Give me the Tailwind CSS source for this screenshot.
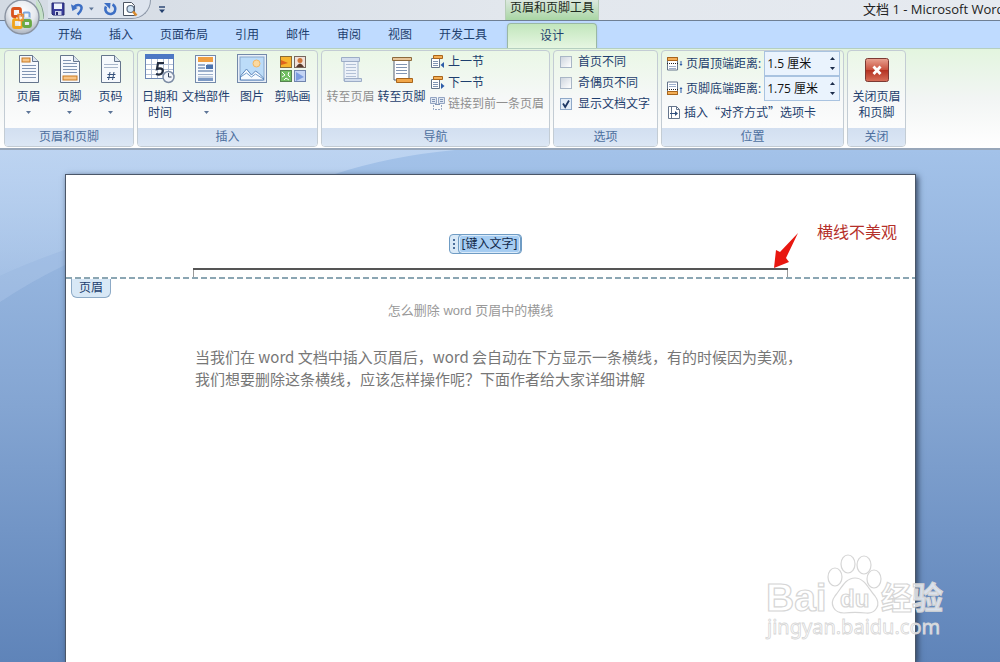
<!DOCTYPE html>
<html lang="zh-CN">
<head>
  <meta charset="UTF-8">
  <meta name="viewport" content="width=device-width, initial-scale=1">
  <title>文档 1 - Microsoft Word</title>
  <script src="https://cdn.jsdelivr.net/npm/@tailwindcss/browser@4"></script>
</head>
<body class="h-screen flex flex-col overflow-hidden text-xs text-[#1e3f6e] font-['Open_Sans','Noto_Sans_CJK_SC',sans-serif]">

  <!-- Title bar -->
  <header class="relative flex h-5 shrink-0 items-start bg-linear-to-r from-[#d3dae3] via-[#e2e7ed] to-[#e6eaf0] pl-12 leading-[18px]">
    <div class="flex h-[19px] w-[457px] shrink-0 items-center">
      <div class="flex h-[19px] items-center gap-1 rounded-br-full border-r border-b border-[#8d98a8] bg-[#dde4ee] pr-3">
        <button type="button" aria-label="保存" class="w-4 ml-[2px]">
          <svg class="block size-4" viewBox="0 0 16 16"><path d="M2 2h12v12H3l-1-1z" fill="#3b3f9c" stroke="#272b70"/><rect x="4" y="2.500" width="8" height="5.500" fill="#eef3fb"/><rect x="5" y="10" width="6.500" height="4" fill="#cdd3ea"/><rect x="6" y="11" width="2" height="3" fill="#272b70"/></svg>
        </button>
        <button type="button" aria-label="撤消" class="flex w-6 items-center gap-1">
          <svg class="block size-4" viewBox="0 0 16 16"><path d="M4 6c4-4 9-2 8 2-.4 2-2 4-4 6" fill="none" stroke="#3d6fc4" stroke-width="2.600"/><path d="M1 3l1.500 7L8 7z" fill="#3d6fc4"/></svg>
          <svg class="block h-1 w-[5px]" viewBox="0 0 5 4"><path d="M0 .5h5L2.500 3.500z" fill="#5d7597"/></svg>
        </button>
        <button type="button" aria-label="恢复" class="w-4 ml-1">
          <svg class="block size-4" viewBox="0 0 16 16"><path d="M10.500 3.500A5 5 0 1 1 4 5.500" fill="none" stroke="#3d6fc4" stroke-width="2.600"/><path d="M2 2h6.500L8 8z" fill="#3d6fc4"/></svg>
        </button>
        <button type="button" aria-label="打印预览" class="w-4">
          <svg class="block size-4" viewBox="0 0 16 16"><path d="M1.500 1.500h8l3 3v10h-11z" fill="#fff" stroke="#4c5563"/><circle cx="8.500" cy="8" r="3.500" fill="#cfe3f5" stroke="#5c6c80" stroke-width="1.200"/><path d="M11 10.500l3.500 4" stroke="#d98b2f" stroke-width="2.500"/></svg>
        </button>
      </div>
      <button type="button" aria-label="自定义快速访问工具栏" class="ml-2">
        <svg class="block h-2 w-[6px]" viewBox="0 0 6 8"><path d="M0 1h6" stroke="#24406e" stroke-width="1.400"/><path d="M0 3.500h6L3 7z" fill="#24406e"/></svg>
      </button>
    </div>
    <div class="h-5 w-[94px] shrink-0 border-x border-[#b7cdb7] bg-linear-to-b from-[#dce8df] to-[#a9d6a4] pt-px text-center leading-[14px] text-[#1d2a20]">页眉和页脚工具</div>
    <div class="ml-auto w-[137px] overflow-hidden whitespace-nowrap text-[13px] text-[#222]">文档 1 - Microsoft Word</div>

    <!-- Office button -->
    <button type="button" aria-label="Office 按钮" class="absolute top-0 left-0 z-10">
      <svg class="block h-9 w-11" viewBox="0 0 44 36">
        <defs><radialGradient id="orb" cx=".5" cy=".35" r=".65"><stop offset="0" stop-color="#fff"/><stop offset=".6" stop-color="#e6e9ee"/><stop offset="1" stop-color="#a9b1bd"/></radialGradient></defs>
        <path d="M36 0q7 7 7 20h-7z" fill="#c5e2c6"/><path d="M38 0q5 6 6 19" fill="none" stroke="#7fa287"/>
        <circle cx="22" cy="17" r="17" fill="url(#orb)" stroke="#8a93a1" stroke-width="1.400"/>
        <g fill="none" stroke-width="2.800">
          <rect x="12.500" y="8.500" width="8" height="8" rx="1.500" stroke="#d9531e"/>
          <rect x="13.500" y="19.500" width="8" height="8" rx="1.500" stroke="#f0a31c"/>
          <rect x="23.500" y="12.500" width="6" height="6" rx="1" stroke="#7da7dd" stroke-width="2"/>
          <rect x="23.500" y="20.500" width="7" height="6" rx="1" stroke="#69a944"/>
          <path d="M20 13v13M16 18h14" stroke="#fff" stroke-width="1.200"/>
          <path d="M18 14.500h5v6h-4z" stroke="#e98a2b" stroke-width="1.500"/>
        </g>
      </svg>
    </button>
  </header>

  <!-- Tabs -->
  <nav class="flex h-7 shrink-0 items-end gap-px border-t border-[#6f7f94] bg-[#bfdbff] pl-[45px] leading-[26px]">
    <a href="#" class="px-[13px]">开始</a>
    <a href="#" class="px-[13px]">插入</a>
    <a href="#" class="px-[13px]">页面布局</a>
    <a href="#" class="px-[13px]">引用</a>
    <a href="#" class="px-[13px]">邮件</a>
    <a href="#" class="px-[13px]">审阅</a>
    <a href="#" class="px-[13px]">视图</a>
    <a href="#" class="px-[13px]">开发工具</a>
    <a href="#" class="ml-[6px] w-[90px] rounded-t border border-b-0 border-[#9ab8a4] bg-linear-to-b from-[#c2e6bc] to-[#e6f6e2] text-center leading-6 shadow-sm">设计</a>
  </nav>

  <!-- Ribbon -->
  <section class="flex h-[102px] shrink-0 gap-[3px] border-t border-b-2 border-t-[#b5cfc0] border-b-[#98a7ba] bg-linear-to-b from-[#e3f5df] via-[#f2f5f4] to-white px-1 pt-px pb-px leading-4">

    <div class="flex w-[130px] flex-col overflow-hidden rounded border border-[#c3ccd4] bg-linear-to-b from-[#eaf7e6] via-[#f6f8f8] to-white">
      <div class="flex flex-1 pt-[3px] pl-[3px]">
        <button type="button" class="flex w-[41px] flex-col items-center">
          <svg class="mb-[5px] block h-[30px] w-6" viewBox="0 0 24 30"><path d="M2.500 1.500h13l6 6v21h-19z" fill="#f6f9fd" stroke="#65758c"/><path d="M15.500 1.500v6h6" fill="#dbe4ef" stroke="#65758c"/><rect x="5" y="4" width="8" height="4" fill="#f7c486" stroke="#c77a22"/><path d="M5 11.500h14M5 14.500h14M5 17.500h14M5 20.500h14M5 23.500h14" stroke="#8195b3"/></svg>
          <span>页眉</span>
          <svg class="mt-[6px] block h-[3px] w-[5px]" viewBox="0 0 5 3"><path d="M0 0h5L2.500 3z" fill="#5d7597"/></svg>
        </button>
        <button type="button" class="flex w-[41px] flex-col items-center">
          <svg class="mb-[5px] block h-[30px] w-6" viewBox="0 0 24 30"><path d="M2.500 1.500h13l6 6v21h-19z" fill="#f6f9fd" stroke="#65758c"/><path d="M15.500 1.500v6h6" fill="#dbe4ef" stroke="#65758c"/><path d="M5 6.500h8M5 9.500h14M5 12.500h14M5 15.500h14M5 18.500h14" stroke="#8195b3"/><rect x="5" y="22" width="14" height="4" fill="#f7c486" stroke="#c77a22"/></svg>
          <span>页脚</span>
          <svg class="mt-[6px] block h-[3px] w-[5px]" viewBox="0 0 5 3"><path d="M0 0h5L2.500 3z" fill="#5d7597"/></svg>
        </button>
        <button type="button" class="flex w-[41px] flex-col items-center">
          <svg class="mb-[5px] block h-[30px] w-6" viewBox="0 0 24 30"><path d="M2.500 1.500h13l6 6v21h-19z" fill="#f6f9fd" stroke="#65758c"/><path d="M15.500 1.500v6h6" fill="#dbe4ef" stroke="#65758c"/><path d="M5 10.500h14M5 13.500h14" stroke="#a9b7cb"/><path d="M11 18l-1.500 8M15 18l-1.500 8M8.500 20.500h8M8 23.500h8" stroke="#34507c"/></svg>
          <span>页码</span>
          <svg class="mt-[6px] block h-[3px] w-[5px]" viewBox="0 0 5 3"><path d="M0 0h5L2.500 3z" fill="#5d7597"/></svg>
        </button>
      </div>
      <h2 class="h-[18px] bg-linear-to-b from-[#d2dff0] to-[#dce7f5] text-center text-[#4d6f9e] leading-[18px]">页眉和页脚</h2>
    </div>

    <div class="flex w-[181px] flex-col overflow-hidden rounded border border-[#c3ccd4] bg-linear-to-b from-[#eaf7e6] via-[#f6f8f8] to-white">
      <div class="flex flex-1 pt-[3px] pl-[3px]">
        <button type="button" class="flex w-[38px] flex-col items-center">
          <svg class="mb-[5px] block h-[30px] w-[30px]" viewBox="0 0 30 30"><rect x=".5" y=".5" width="28" height="24" fill="#fff" stroke="#6d86b3"/><rect width="29" height="5" fill="#4d78c4"/><path d="M1 10.500h27M1 15.500h27M1 20.500h27M6.500 5v19M12.500 5v19M18.500 5v19M23.500 5v19" stroke="#b3c0d6"/><path d="M19 9h-6l-1 6c5-2 7 1 5 4-1 1.500-3 2-6 1" fill="none" stroke="#222c3e" stroke-width="2.200"/><circle cx="23.500" cy="23" r="5.500" fill="#f2f5fa" stroke="#7c8ca4" stroke-width="1.500"/><path d="M23.500 19v4h3" fill="none" stroke="#33415a"/></svg>
          <span>日期和<br>时间</span>
        </button>
        <button type="button" class="flex w-[54px] flex-col items-center">
          <svg class="mb-[5px] block h-[30px] w-6" viewBox="0 0 24 30"><rect x="1.500" y="1.500" width="20" height="27" fill="#f7fafd" stroke="#7389aa"/><rect x="4" y="3" width="15" height="5" fill="#ef9f42"/><path d="M4 11h7M4 14h7M4 17h15M13 11h6" stroke="#7e97bb" stroke-width="1.500"/><rect x="12" y="11" width="7" height="4" fill="#4a73ae"/><path d="M4 20.500h15M4 23h15" stroke="#9db0cb"/><rect x="4" y="24" width="15" height="3" fill="#7d9ac5"/></svg>
          <span class="whitespace-nowrap">文档部件</span>
          <svg class="mt-[6px] block h-[3px] w-[5px]" viewBox="0 0 5 3"><path d="M0 0h5L2.500 3z" fill="#5d7597"/></svg>
        </button>
        <button type="button" class="flex w-[38px] flex-col items-center">
          <svg class="mb-[5px] block h-[30px] w-[30px]" viewBox="0 0 30 30"><rect x=".5" y=".5" width="29" height="28" fill="#e8eff8" stroke="#7389aa"/><rect x="3" y="3" width="24" height="23" fill="#bcdcf8" stroke="#89a8cb"/><circle cx="19.500" cy="9.500" r="3.500" fill="#fbd9a0" stroke="#f0b765"/><path d="M3.500 22l6-7 5 6 4-4 3 2 5 5v2h-23z" fill="#f7fbff" stroke="#5c85ba"/><path d="M3.500 23l6-4 5 4 4-3 8 5" fill="none" stroke="#6f9bcb"/></svg>
          <span>图片</span>
        </button>
        <button type="button" class="flex w-[43px] flex-col items-center">
          <svg class="mb-[5px] block h-[30px] w-7" viewBox="0 0 28 30"><rect x="1.500" y="2.500" width="11" height="11" fill="#f7b52f" stroke="#8c6c34"/><path d="M2 6l7 3-7 2z" fill="#de621d"/><rect x="15.500" y="2.500" width="11" height="11" fill="#f0e1d8" stroke="#77685e"/><circle cx="21" cy="6.500" r="2.500" fill="#cf7639"/><path d="M17 13q4-7 8 0z" fill="#58392b"/><rect x="1.500" y="16.500" width="11" height="11" fill="#72bf63" stroke="#568350"/><path d="M3 18l3 3-3 2M10 18l-1 3 2 2M5 26l2-2 3 2" fill="none" stroke="#fff"/><rect x="15.500" y="16.500" width="11" height="11" fill="#c4d4f4" stroke="#7084ad"/><path d="M17 18l8 5-8 4z" fill="#7c9de0"/></svg>
          <span>剪贴画</span>
        </button>
      </div>
      <h2 class="h-[18px] bg-linear-to-b from-[#d2dff0] to-[#dce7f5] text-center text-[#4d6f9e] leading-[18px]">插入</h2>
    </div>

    <div class="flex w-[229px] flex-col overflow-hidden rounded border border-[#c3ccd4] bg-linear-to-b from-[#eaf7e6] via-[#f6f8f8] to-white">
      <div class="flex flex-1 pl-[3px]">
        <button type="button" disabled class="flex w-[51px] flex-col items-center pt-[3px] text-[#8f8f8f]">
          <svg class="mb-[5px] block h-[30px] w-6" viewBox="0 0 24 30"><path d="M5 6h14v21H5z" fill="#edf2f9" stroke="#a2b2cc"/><path d="M7 10.500h10M7 13.500h10M7 16.500h10M7 19.500h10M7 22.500h10" stroke="#b3c1d6"/><path d="M2.500 3.500h18v4h-18zM5.500 24.500h17v3h-17z" fill="#d3deee" stroke="#9dadc7"/></svg>
          <span class="whitespace-nowrap">转至页眉</span>
        </button>
        <button type="button" class="flex w-[51px] flex-col items-center pt-[3px]">
          <svg class="mb-[5px] block h-[30px] w-6" viewBox="0 0 24 30"><path d="M4 6h15v20H4z" fill="#fff" stroke="#545e70"/><path d="M6 10.500h11M6 13.500h11M6 16.500h11M6 19.500h11" stroke="#8195b3"/><path d="M2.500 3.500h19v3h-19z" fill="#e7c69a" stroke="#8d6a3c"/><path d="M6.500 24.500h16v4h-16z" fill="#f1a649" stroke="#a9651a"/></svg>
          <span class="whitespace-nowrap">转至页脚</span>
        </button>
        <div class="ml-[3px] flex flex-col">
          <button type="button" class="flex h-[21px] items-center gap-[3px] whitespace-nowrap">
            <svg class="block size-[15px]" viewBox="0 0 15 15"><path d="M1.500 4.500h8v9h-8z" fill="#fff" stroke="#65758c"/><path d="M3 7.500h5M3 9.500h5M3 11.500h5" stroke="#8195b3"/><path d="M3.500 1.500h9v3h-9z" fill="#f3ae55" stroke="#a9651a"/><path d="M14 8v6l-3.500-3z" fill="#2d5da8"/></svg>
            上一节
          </button>
          <button type="button" class="flex h-[21px] items-center gap-[3px] whitespace-nowrap">
            <svg class="block size-[15px]" viewBox="0 0 15 15"><path d="M1.500 4.500h8v9h-8z" fill="#fff" stroke="#65758c"/><path d="M3 7.500h5M3 9.500h5M3 11.500h5" stroke="#8195b3"/><path d="M3.500 1.500h9v3h-9z" fill="#f3ae55" stroke="#a9651a"/><path d="M11 8v6l3.500-3z" fill="#2d5da8"/></svg>
            下一节
          </button>
          <button type="button" disabled class="flex h-[21px] items-center gap-[3px] whitespace-nowrap text-[#8f8f8f]">
            <svg class="block size-[15px]" viewBox="0 0 15 15"><path d="M.5 1.500h6v6h-6zM8.500 1.500h6v6h-6z" fill="#dfe7f2" stroke="#93a5c2"/><path d="M2 3.500h3M2 5.500h3M10 3.500h3M10 5.500h3M5 8.500h5" stroke="#8094b4"/><path d="M3.500 9v4.500h8V9" fill="none" stroke="#93a5c2" stroke-dasharray="2 1"/></svg>
            链接到前一条页眉
          </button>
        </div>
      </div>
      <h2 class="h-[18px] bg-linear-to-b from-[#d2dff0] to-[#dce7f5] text-center text-[#4d6f9e] leading-[18px]">导航</h2>
    </div>

    <div class="flex w-[105px] flex-col overflow-hidden rounded border border-[#c3ccd4] bg-linear-to-b from-[#eaf7e6] via-[#f6f8f8] to-white">
      <div class="flex-1 pl-[6px]">
        <label class="flex h-[21px] items-center gap-[6px] whitespace-nowrap">
          <input type="checkbox" class="size-3 appearance-none border border-[#a9b6c6] bg-linear-to-br from-[#cfd6df] to-white">
          首页不同
        </label>
        <label class="flex h-[21px] items-center gap-[6px] whitespace-nowrap">
          <input type="checkbox" class="size-3 appearance-none border border-[#a9b6c6] bg-linear-to-br from-[#cfd6df] to-white">
          奇偶页不同
        </label>
        <label class="flex h-[21px] items-center gap-[6px] whitespace-nowrap">
          <span class="grid size-3">
            <input type="checkbox" checked class="peer col-start-1 row-start-1 size-3 appearance-none border border-[#8fa9c8] bg-[#e3edf8]">
            <svg class="pointer-events-none invisible col-start-1 row-start-1 block size-3 peer-checked:visible" viewBox="0 0 12 12"><path d="M3 5.500l2.200 3.500L9 2.500" fill="none" stroke="#1f3864" stroke-width="1.800"/></svg>
          </span>
          显示文档文字
        </label>
      </div>
      <h2 class="h-[18px] bg-linear-to-b from-[#d2dff0] to-[#dce7f5] text-center text-[#4d6f9e] leading-[18px]">选项</h2>
    </div>

    <div class="flex w-[183px] flex-col overflow-hidden rounded border border-[#c3ccd4] bg-linear-to-b from-[#eaf7e6] via-[#f6f8f8] to-white">
      <div class="flex-1 pl-[5px] pr-[3px]">
        <div class="flex h-[25px] items-center gap-[3px]">
          <svg class="block h-[15px] w-4 shrink-0" viewBox="0 0 16 15"><path d="M.5 1v13h10V1" fill="#fff" stroke="#65758c"/><path d="M.5 1.500h10v3H.5z" fill="#f3ae55" stroke="#a9651a"/><path d="M0 7.500h12" stroke="#222" stroke-dasharray="1 1"/><path d="M2 10.500h7M2 12.500h7" stroke="#9db0cb"/><path d="M14 5v4" stroke="#2d5da8"/><path d="M12.500 8h3L14 10z" fill="#2d5da8"/></svg>
          <label for="topDist" class="flex-1 whitespace-nowrap">页眉顶端距离:</label>
          <div class="flex h-[25px] w-[76px] shrink-0 border border-[#a9c3e0] bg-[#eaf3fd]">
            <input id="topDist" type="text" value="1.5 厘米" class="w-[60px] bg-transparent pl-[2px] text-[#111] outline-none">
            <div class="flex flex-1 flex-col items-center justify-around py-[2px]">
              <button type="button" aria-label="增大页眉顶端距离"><svg class="block h-[3px] w-[5px]" viewBox="0 0 5 3"><path d="M0 3h5L2.500 0z" fill="#1c2c4a"/></svg></button>
              <button type="button" aria-label="减小页眉顶端距离"><svg class="block h-[3px] w-[5px]" viewBox="0 0 5 3"><path d="M0 0h5L2.500 3z" fill="#1c2c4a"/></svg></button>
            </div>
          </div>
        </div>
        <div class="flex h-[25px] items-center gap-[3px]">
          <svg class="block h-[15px] w-4 shrink-0" viewBox="0 0 16 15"><path d="M.5 14V1h10v13" fill="#fff" stroke="#65758c"/><path d="M2 3.500h7M2 5.500h7" stroke="#9db0cb"/><path d="M0 8.500h12" stroke="#222" stroke-dasharray="1 1"/><path d="M.5 10.500h10v3H.5z" fill="#f3ae55" stroke="#a9651a"/><path d="M14 7v5" stroke="#2d5da8"/><path d="M12.500 8h3L14 6z" fill="#2d5da8"/></svg>
          <label for="bottomDist" class="flex-1 whitespace-nowrap">页脚底端距离:</label>
          <div class="flex h-[25px] w-[76px] shrink-0 border border-[#a9c3e0] bg-[#eaf3fd]">
            <input id="bottomDist" type="text" value="1.75 厘米" class="w-[60px] bg-transparent pl-[2px] text-[#111] outline-none">
            <div class="flex flex-1 flex-col items-center justify-around py-[2px]">
              <button type="button" aria-label="增大页脚底端距离"><svg class="block h-[3px] w-[5px]" viewBox="0 0 5 3"><path d="M0 3h5L2.500 0z" fill="#1c2c4a"/></svg></button>
              <button type="button" aria-label="减小页脚底端距离"><svg class="block h-[3px] w-[5px]" viewBox="0 0 5 3"><path d="M0 0h5L2.500 3z" fill="#1c2c4a"/></svg></button>
            </div>
          </div>
        </div>
        <button type="button" class="flex h-[22px] items-center gap-[3px] whitespace-nowrap">
          <svg class="block h-[15px] w-[14px]" viewBox="0 0 14 15"><path d="M1.500 1.500h8l3 3v9h-11z" fill="#fff" stroke="#65758c"/><path d="M4.500 1.500v12M9.500 1.500v3h3" fill="none" stroke="#65758c"/><path d="M3 8.500h6" stroke="#2f4f7d"/><path d="M8 6l3 2.500L8 11z" fill="#2f4f7d"/></svg>
          <span class="font-['Noto_Sans_CJK_SC',sans-serif]">插入“对齐方式”选项卡</span>
        </button>
      </div>
      <h2 class="h-[18px] bg-linear-to-b from-[#d2dff0] to-[#dce7f5] text-center text-[#4d6f9e] leading-[18px]">位置</h2>
    </div>

    <div class="flex w-[59px] flex-col overflow-hidden rounded border border-[#c3ccd4] bg-linear-to-b from-[#eaf7e6] via-[#f6f8f8] to-white">
      <button type="button" class="flex flex-1 flex-col items-center pt-[3px]">
        <svg class="mb-[5px] block h-[30px] w-6" viewBox="0 0 24 30"><defs><linearGradient id="red" x2="0" y2="1"><stop offset="0" stop-color="#e9a392"/><stop offset=".5" stop-color="#c9503c"/><stop offset=".5" stop-color="#b3301f"/><stop offset="1" stop-color="#d8705a"/></linearGradient></defs><rect x=".5" y="4.500" width="23" height="23" rx="2" fill="url(#red)" stroke="#7c3a33"/><path d="M8.500 12.500l7 7.500M15.500 12.500l-7 7.500" stroke="#fff" stroke-width="2.800"/></svg>
        <span class="whitespace-nowrap">关闭页眉<br>和页脚</span>
      </button>
      <h2 class="h-[18px] bg-linear-to-b from-[#d2dff0] to-[#dce7f5] text-center text-[#4d6f9e] leading-[18px]">关闭</h2>
    </div>
  </section>

  <!-- Document area -->
  <main class="relative flex flex-1 overflow-hidden bg-linear-to-b from-[#a3c2e9] via-[#84a5d2] to-[#5f84b9] pt-6 pr-[84px] pl-[65px]">
    <svg class="absolute top-0 left-0 h-[170px] w-[460px]" viewBox="0 0 460 170">
      <defs><linearGradient id="glow" x2="0" y2="1"><stop offset="0" stop-color="#c3d8f3" stop-opacity=".8"/><stop offset="1" stop-color="#c3d8f3" stop-opacity=".35"/></linearGradient></defs>
      <path d="M0 0h455Q390 6 335 24L65 100Q30 112 0 126z" fill="url(#glow)"/>
      <path d="M0 126q30-14 65-26v15Q30 132 0 152z" fill="#c3d8f3" fill-opacity=".25"/>
    </svg>

    <article class="relative min-w-0 flex-1 border border-b-0 border-[#4b5768] bg-white shadow-[2px_2px_6px_#33445f]">
      <!-- Header zone -->
      <div class="mx-[127px] flex h-[95px] items-start justify-center border-b-2 border-[#555] pt-[59px]">
        <div class="-ml-[10px] flex h-5 items-center rounded border border-[#6f9cc4] bg-[#d9e9f7] text-[#12294a]">
          <svg class="block h-3 w-2" viewBox="0 0 8 12"><path d="M4 1v2M4 5v2M4 9v2" stroke="#4c6f9c" stroke-width="2"/></svg>
          <span class="rounded border border-[#6f9cc4] bg-[#a6cdf2] px-[3px] leading-[18px] ring-1 ring-white/60 ring-inset">[键入文字]</span>
        </div>
      </div>
      <div class="mx-[127px] h-[7px] border-x border-[#999]"></div>
      <svg class="block h-[2px] w-full"><path d="M0 1h2000" stroke="#8ba6b3" stroke-width="2" stroke-dasharray="6 3"/></svg>
      <div class="ml-[5px] w-10 rounded-b-md border border-t-0 border-[#8daac6] bg-[#d8e8f6] text-center leading-[18px]">页眉</div>

      <!-- Body text -->
      <div class="px-[129px] font-['Noto_Sans_CJK_SC',sans-serif] text-[15px] leading-[22px] text-[#777]">
        <h1 class="-ml-10 mt-[2px] mb-6 text-center font-['Liberation_Sans','Noto_Sans_CJK_SC',sans-serif] text-[13px] text-[#999]">怎么删除 word 页眉中的横线</h1>
        <p class="whitespace-nowrap">当我们在 word 文档中插入页眉后，word 会自动在下方显示一条横线，有的时候因为美观，<br>我们想要删除这条横线，应该怎样操作呢？下面作者给大家详细讲解</p>
      </div>

      <!-- Red annotation -->
      <div class="absolute top-[46px] right-[18px] flex items-start gap-[18px] text-base leading-[22px] text-[#b5302a]">
        <svg class="mt-3 block h-9 w-[26px]" viewBox="0 0 26 36"><path d="M25 0L7 19l-4-2-2 18 15-6-3-4z" fill="#e81710"/></svg>
        <span>横线不美观</span>
      </div>
    </article>

    <!-- Watermark -->
    <svg class="absolute right-[50px] bottom-[18px] block h-[92px] w-[186px]" viewBox="0 0 186 92" aria-label="Baidu 经验">
      <g fill="#fff" fill-opacity=".75" stroke="#d6d6d6" stroke-width="1.200">
        <ellipse cx="71" cy="25" rx="7" ry="9"/>
        <ellipse cx="84" cy="12" rx="7" ry="9"/>
        <ellipse cx="100" cy="13" rx="7" ry="9"/>
        <ellipse cx="110" cy="27" rx="7" ry="9"/>
        <path d="M91 26c10 0 14 12 20 18 7 9 0 18-9 17-8-1-14-1-22 0-10 0-15-9-9-17 6-7 10-18 20-18z"/>
        <text x="2" y="59" font-family="Liberation Sans" font-weight="700" font-size="39">Bai</text>
        <text x="76" y="55" font-family="Liberation Sans" font-weight="700" font-size="24">du</text>
        <text x="117" y="57" font-family="Noto Sans CJK SC" font-weight="700" font-size="31">经验</text>
        <text x="3" y="82" font-family="Noto Sans" font-size="20" stroke-width=".8">jingyan.baidu.com</text>
      </g>
    </svg>
  </main>

</body>
</html>
